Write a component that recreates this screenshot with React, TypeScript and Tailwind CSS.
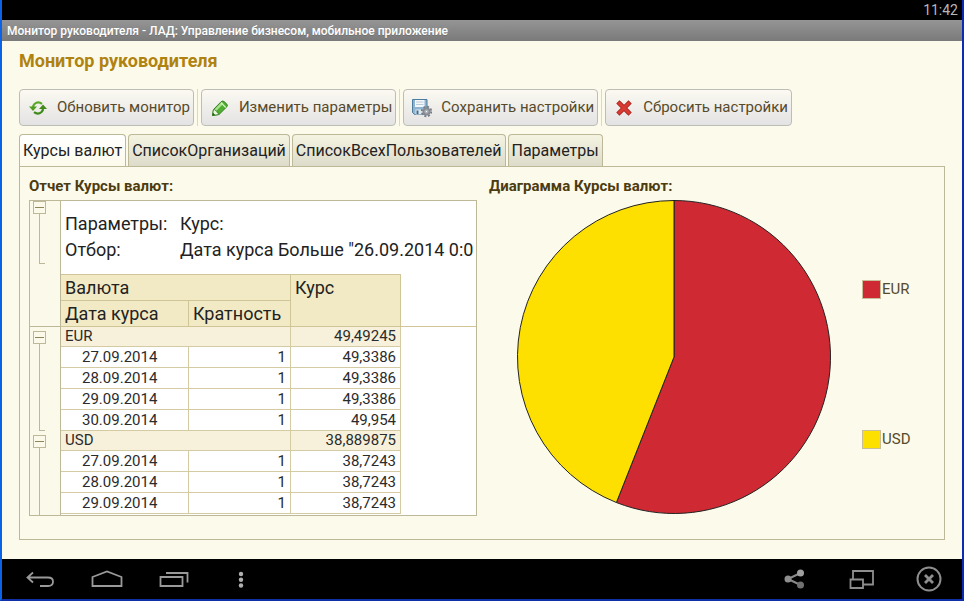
import { useState } from 'react';

const tabs = ['Курсы валют', 'СписокОрганизаций', 'СписокВсехПользователей', 'Параметры'];

const groups = [
  {
    currency: 'EUR', average: '49,49245', value: 49.49245, color: '#cf2a34',
    rows: [['27.09.2014', '49,3386'], ['28.09.2014', '49,3386'], ['29.09.2014', '49,3386'], ['30.09.2014', '49,954']],
  },
  {
    currency: 'USD', average: '38,889875', value: 38.889875, color: '#fee000',
    rows: [['27.09.2014', '38,7243'], ['28.09.2014', '38,7243'], ['29.09.2014', '38,7243']],
  },
];

function RefreshIcon() {
  return (
    <svg className="h-5 w-5" viewBox="0 0 20 20" fill="none">
      <path d="M5 9.500a5 5 0 0 1 1.500-3.500Q10 3 14 5.800" stroke="#5aa82a" strokeWidth="2.200" />
      <path d="M15 10a5 5 0 0 1-1.500 4Q10 17 6 14.200" stroke="#3f8a18" strokeWidth="2.200" />
      <path d="M1 8.500h8l-4 4.500z" fill="#4e9c20" />
      <path d="M11 11h8l-4-4.500z" fill="#3f8a18" />
    </svg>
  );
}

function PencilIcon() {
  return (
    <svg className="h-5 w-5" viewBox="0 0 20 20">
      <path d="M2.500 17.500l1-6L11 3.800q1.500-1.400 3-.3l2.800 2.600q1.200 1.300 0 2.700L9 16.500z" fill="#4fae32" stroke="#35801f" />
      <path d="M5.500 12l7-7.200" stroke="#a9e38c" strokeWidth="2.400" />
      <path d="M3.400 11.800q1.200-.6 2 .8 1.800.2 1.700 1.900 1.600.4 1.700 2l-6.300 1z" fill="#edf5df" stroke="#35801f" strokeWidth=".8" />
      <path d="M2.500 17.500l.5-2.700 2.200 2.300z" fill="#245c14" />
      <path d="M11 4.800l4.800 4.700" stroke="#d5f0c6" strokeWidth="1.200" />
    </svg>
  );
}

function SaveIcon() {
  return (
    <svg className="h-5 w-5" viewBox="0 0 20 20">
      <path d="M.5 1.500h14.500v15H2.500l-2-2z" fill="#8fb4cf" stroke="#4d7c9f" />
      <path d="M3 2h9.500v7H3z" fill="#f3f7fa" />
      <path d="M4 4h7.500M4 6.500h7.500" stroke="#b9cbd8" />
      <path d="M3.500 11.500h8v5h-8z" fill="#dfe8ee" />
      <path d="M4.500 12.500h2v3.500h-2z" fill="#3f6d90" />
      <circle cx="14.500" cy="13.500" r="4.700" fill="none" stroke="#777c86" strokeWidth="2" strokeDasharray="2 1.690" />
      <circle cx="14.500" cy="13.500" r="3" fill="#d3d6da" stroke="#858a93" strokeWidth="2" />
      <circle cx="14.500" cy="13.500" r="1.200" fill="#f7f7f7" stroke="#777c86" strokeWidth=".7" />
    </svg>
  );
}

function ResetIcon() {
  return (
    <svg className="h-5 w-5" viewBox="0 0 20 20">
      <path d="M5.500 5.500l9 9M14.500 5.500l-9 9" stroke="#ab2722" strokeWidth="4.600" strokeLinecap="square" />
      <path d="M5.500 5.500l9 9M14.500 5.500l-9 9" stroke="#d93a32" strokeWidth="3" strokeLinecap="square" />
    </svg>
  );
}

const actions = [
  { label: 'Обновить монитор', icon: <RefreshIcon /> },
  { label: 'Изменить параметры', icon: <PencilIcon /> },
  { label: 'Сохранить настройки', icon: <SaveIcon /> },
  { label: 'Сбросить настройки', icon: <ResetIcon /> },
];

function Toolbar() {
  return (
    <div className="flex">
      {actions.map((action, i) => (
        <div key={action.label} className="flex">
          {i > 0 && <div className="mx-[3px] w-px bg-[#dcd9bd]" />}
          <button className="flex h-[37px] items-center gap-[9px] whitespace-nowrap rounded border border-[#bdbdb8] bg-linear-to-b from-[#fbf9f0] to-[#e4e3e4] pl-2 pr-[3px] text-[15px] text-[#564a2b]">
            {action.icon}
            {action.label}
          </button>
        </div>
      ))}
    </div>
  );
}

// collapse button with the bracket that runs down along its rows
function Bracket(props: { label: string, className: string, closed?: boolean }) {
  return (
    <div className={'flex flex-col pl-[3px] ' + props.className}>
      <button aria-label={props.label} className="flex h-[13px] w-[13px] shrink-0 items-center justify-center border border-[#bdb898]">
        <span className="h-px w-[9px] bg-[#8f875c]" />
      </button>
      <div className={'ml-[6px] w-[6px] flex-1 border-l border-[#bdb898] ' + (props.closed ? 'border-b' : '')} />
    </div>
  );
}

function Report() {
  return (
    <div className="flex overflow-hidden border border-[#bdb898] bg-white">
      <div className="flex w-[30px] shrink-0 flex-col bg-[#fbf9e9]">
        <div className="h-[126px] border-b border-[#bdb898]">
          <Bracket label="Свернуть параметры" className="h-[63px]" closed />
        </div>
        <Bracket label="Свернуть EUR" className="h-[104px] pt-1" closed />
        <Bracket label="Свернуть USD" className="flex-1 pt-1" />
      </div>
      <div className="min-w-0 flex-1 border-l border-[#bdb898] pb-px">
        <dl className="grid h-[73px] grid-cols-[115px_1fr] content-start whitespace-nowrap pl-1 pt-[10px] text-[18px] leading-[26px] text-[#222]">
          <dt>Параметры:</dt>
          <dd>Курс:</dd>
          <dt>Отбор:</dt>
          <dd>Дата курса Больше "26.09.2014 0:0</dd>
        </dl>
        <table className="w-full table-fixed border-separate border-spacing-0 text-[15px] leading-5 text-[#2b2b2b]">
          <colgroup>
            <col className="w-[128px]" />
            <col className="w-[102px]" />
            <col className="w-[110px]" />
            <col />
          </colgroup>
          <thead className="text-left text-[18px] leading-[25px] text-[#222]">
            <tr className="h-[27px]">
              <th colSpan={2} className="border-y border-r border-[#cfc597] bg-[#f2eac4] px-1 font-normal">Валюта</th>
              <th rowSpan={2} className="border-y border-r border-[#cfc597] bg-[#f2eac4] px-1 align-top font-normal">Курс</th>
              <td rowSpan={2} className="border-b border-[#cfc597]" />
            </tr>
            <tr className="h-[26px]">
              <th className="border-b border-r border-[#cfc597] bg-[#f2eac4] px-1 font-normal">Дата курса</th>
              <th className="border-b border-r border-[#cfc597] bg-[#f2eac4] px-1 font-normal">Кратность</th>
            </tr>
          </thead>
          {groups.map((group) => (
            <tbody key={group.currency}>
              <tr className="h-5 bg-[#f7f1db] leading-[19px]">
                <td colSpan={2} className="border-b border-r border-[#d5cba2] px-1">{group.currency}</td>
                <td className="border-b border-r border-[#d5cba2] px-1 text-right">{group.average}</td>
                <td className="bg-white" />
              </tr>
              {group.rows.map(([date, rate]) => (
                <tr key={date} className="h-[21px]">
                  <td className="border-b border-r border-[#d5cba2] pl-[21px]">{date}</td>
                  <td className="border-b border-r border-[#d5cba2] px-1 text-right">1</td>
                  <td className="border-b border-r border-[#d5cba2] px-1 text-right">{rate}</td>
                  <td />
                </tr>
              ))}
            </tbody>
          ))}
        </table>
      </div>
    </div>
  );
}

function PieChart() {
  const share = groups[0].value / (groups[0].value + groups[1].value);
  const angle = share * 2 * Math.PI;
  const x = 157 + 156.5 * Math.sin(angle);
  const y = 157 - 156.5 * Math.cos(angle);
  return (
    <svg className="w-[314px] shrink-0" viewBox="0 0 314 314" role="img" aria-label="Курсы валют" stroke="#222" strokeWidth="1">
      <path d={`M157 157V.5A156.500 156.500 0 1 1 ${x} ${y}Z`} fill={groups[0].color} />
      <path d={`M157 157L${x} ${y}A156.500 156.500 0 0 1 157 .5Z`} fill={groups[1].color} />
    </svg>
  );
}

function NavBar() {
  return (
    <nav className="flex h-10 items-center justify-between bg-black pl-[22px] pr-[17px] pt-0.5">
      <div className="flex items-center gap-[35px]">
        <button aria-label="Назад">
          <svg className="h-8 w-8" viewBox="0 0 32 32" fill="none" stroke="#9a9a9a" strokeWidth="1.800">
            <path d="M9 8.500L3.500 13.500l5.500 5M4 13.500h20q5 0 5 4.200t-5 4.300h-8" />
          </svg>
        </button>
        <button aria-label="Домой">
          <svg className="h-8 w-8" viewBox="0 0 32 32" fill="none" stroke="#9a9a9a" strokeWidth="1.800">
            <path d="M1.500 22v-9L16 7.500l14.500 5.500v9z" />
          </svg>
        </button>
        <button aria-label="Недавние">
          <svg className="h-8 w-8" viewBox="0 0 32 32" fill="none" stroke="#9a9a9a" strokeWidth="1.800">
            <path d="M2.500 13h22v9h-22zM8 9h21.500v9.500" />
          </svg>
        </button>
        <button aria-label="Меню">
          <svg className="h-8 w-8" viewBox="0 0 32 32" fill="#b0b0b0">
            <circle cx="16" cy="10" r="2.200" />
            <circle cx="16" cy="15.700" r="2.200" />
            <circle cx="16" cy="21.500" r="2.200" />
          </svg>
        </button>
      </div>
      <div className="flex items-center gap-[35px]">
        <button aria-label="Поделиться">
          <svg className="h-8 w-8" viewBox="0 0 32 32">
            <path d="M21.500 9L9 15l12.500 6" fill="none" stroke="#8a8a8a" strokeWidth="2" />
            <circle cx="21.500" cy="9" r="3.500" fill="#a0a0a0" />
            <circle cx="9" cy="15" r="3.500" fill="#8e8e8e" />
            <circle cx="21.500" cy="21" r="3.500" fill="#707070" />
          </svg>
        </button>
        <button aria-label="Окно">
          <svg className="h-8 w-8" viewBox="0 0 32 32" stroke="#8e8e8e" strokeWidth="1.800">
            <path d="M7 7h20v13.500H7z" fill="none" />
            <path d="M4.500 15.500h12.500V24H4.500z" fill="#000" />
          </svg>
        </button>
        <button aria-label="Закрыть">
          <svg className="h-8 w-8" viewBox="0 0 32 32" fill="none" stroke="#8e8e8e">
            <circle cx="16" cy="15" r="11.500" strokeWidth="2" />
            <path d="M12 11l8 8M20 11l-8 8" strokeWidth="2.800" />
          </svg>
        </button>
      </div>
    </nav>
  );
}

export default function App() {
  const [active, setActive] = useState(tabs[0]);

  return (
    <div className="flex min-h-screen flex-col border-b-2 border-l-2 border-r-2 border-b-[#1030a8] border-l-[#0a62e6] border-r-[#0a2cb4] bg-[#fcfaea] font-['Roboto','Liberation_Sans',sans-serif]">
      <div className="flex h-5 items-center justify-end bg-black pr-1 text-[14px] text-[#b8b8b8]">11:42</div>
      <header className="flex h-[21px] items-center bg-linear-to-b from-[#959595] to-[#7a7a7a] px-[5px] text-[12px] font-medium text-white text-shadow-2xs">
        Монитор руководителя - ЛАД: Управление бизнесом, мобильное приложение
      </header>

      <main className="flex flex-1 flex-col px-[17px] pb-[19px] pt-2">
        <h1 className="mb-4 text-[18px] font-bold leading-6 text-[#b0820f]">Монитор руководителя</h1>
        <Toolbar />

        <div role="tablist" className="mt-2 flex gap-0.5">
          {tabs.map((tab) => (
            <button
              key={tab}
              role="tab"
              aria-selected={tab === active}
              onClick={() => setActive(tab)}
              className={'whitespace-nowrap rounded-t border border-b-0 border-[#bdb898] px-[3px] text-[16px] text-[#222] '
                + (tab === active ? '-mb-px h-[33px] bg-linear-to-b from-white to-[#fcfaea]' : 'h-8 bg-linear-to-b from-[#f5f3e2] to-[#dddbca]')}
            >
              {tab}
            </button>
          ))}
        </div>

        <div role="tabpanel" className="flex flex-1 gap-3 border border-[#bdb898] pl-[9px] pr-[7px] pt-[9px]">
          <section className="min-w-0 flex-1">
            <h2 className="mb-1 text-[15px] font-bold leading-5 text-[#4d3c10]">Отчет Курсы валют:</h2>
            <Report />
          </section>
          <section className="min-w-0 flex-1">
            <h2 className="mb-1 text-[15px] font-bold leading-5 text-[#4d3c10]">Диаграмма Курсы валют:</h2>
            <div className="flex gap-[31px] pl-7">
              <PieChart />
              <ul className="flex flex-col justify-around pt-[14px] text-[15px] text-[#564a2b]">
                {groups.map((group) => (
                  <li key={group.currency} className="flex items-center gap-px">
                    <span className="h-[19px] w-[19px] border border-[#c9bd9a]" style={{ backgroundColor: group.color }} />
                    {group.currency}
                  </li>
                ))}
              </ul>
            </div>
          </section>
        </div>
      </main>

      <NavBar />
    </div>
  );
}
